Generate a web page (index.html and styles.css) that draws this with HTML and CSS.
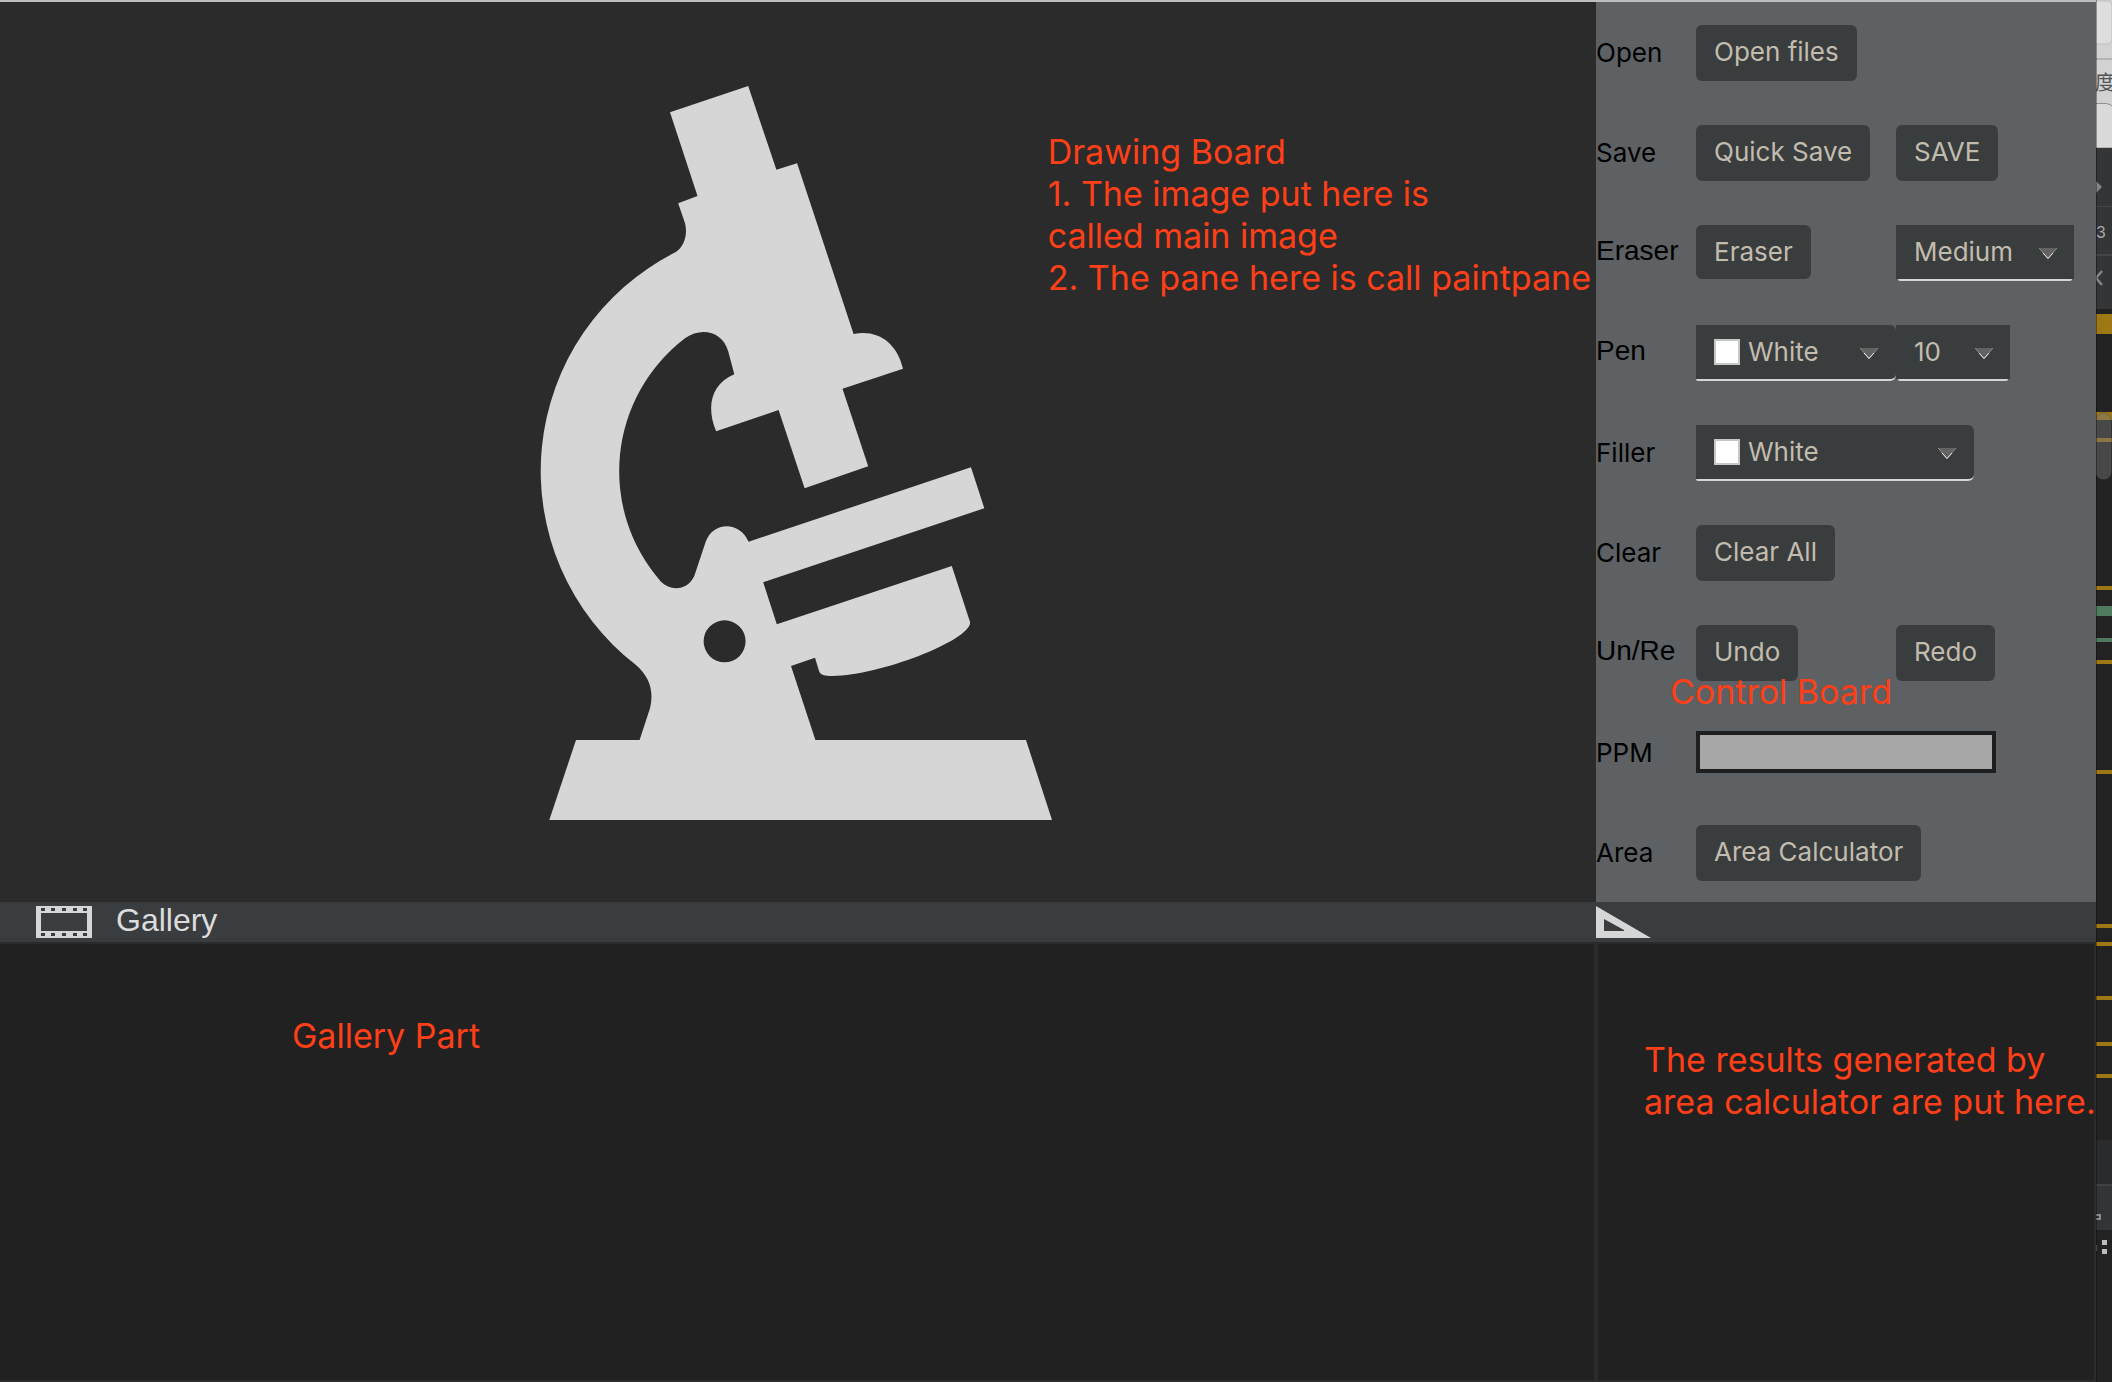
FILE: index.html
```html
<!DOCTYPE html>
<html lang="en">
<head>
<meta charset="utf-8">
<title>Microscope image editor</title>
<link rel="stylesheet" href="styles.css">
</head>
<body>
<div class="desktop">
  <div class="app">
    <main class="board">
      <svg class="microscope" viewBox="538 83 520 738" role="img" aria-label="Microscope">
        <path fill-rule="evenodd" d="M670 112.3 748.2 86 776.4 169.7 797.1 163.3 853.6 334C878 329 897 343 903 368.7L842.5 388.7 868.2 466.3 804.6 488.3 778.6 410 716.1 431.3C706 407 711 384 734.3 374.3L728.2 351.3C723 332 702 326 685 338.3A167 167 0 0 0 661 581.7C671 592 688 590 694.3 576L705.7 541.7C713 521 740 521 748.6 541.7L971 467.3 984.3 508.3 763.2 582.3 776.8 624.3 951.8 566 970 622C973 640 872 679 827 675.7Q820 675 819 671L815 657.7 791 666 815.4 740H1026L1052 820H549.3L576 740H639.6L650 708.3C654 692 650 677 636 665A245 245 0 0 1 675.4 252.3C684 247 688 235 685 223.3L678.2 203.3 697.5 196ZM745.6 641.3a21 21 0 1 0-42 0a21 21 0 1 0 42 0Z"/>
      </svg>
      <p class="note note-board">Drawing Board<br>1. The image put here is<br>called main image<br>2. The pane here is call paintpane</p>
    </main>

    <form class="controls">
      <div class="row">
        <label class="name" for="open">Open</label>
        <button id="open" class="btn" type="button">Open files</button>
      </div>
      <div class="row">
        <label class="name" for="quick">Save</label>
        <button id="quick" class="btn" type="button">Quick Save</button>
        <button class="btn" type="button">SAVE</button>
      </div>
      <div class="row">
        <label class="name name-alt" for="eraser">Eraser</label>
        <button id="eraser" class="btn btn-short" type="button">Eraser</button>
        <div class="combo combo-size">
          <select aria-label="Eraser size"><option>Medium</option></select>
          <svg class="arrow" viewBox="0 0 18 12"><path class="tri" d="M0 0H18L9 10Z"/><path class="side" d="M0 0 9 10.500 18 0"/><path class="vee" d="M4 5 9 10.500 14 5"/></svg>
        </div>
      </div>
      <div class="row">
        <label class="name name-alt" for="pen">Pen</label>
        <div class="combo picker">
          <span class="swatch"></span>
          <select id="pen"><option>White</option></select>
          <svg class="arrow" viewBox="0 0 18 12"><path class="tri" d="M0 0H18L9 10Z"/><path class="side" d="M0 0 9 10.500 18 0"/><path class="vee" d="M4 5 9 10.500 14 5"/></svg>
        </div>
        <div class="combo combo-width">
          <select aria-label="Pen width"><option>10</option></select>
          <svg class="arrow" viewBox="0 0 18 12"><path class="tri" d="M0 0H18L9 10Z"/><path class="side" d="M0 0 9 10.500 18 0"/><path class="vee" d="M4 5 9 10.500 14 5"/></svg>
        </div>
      </div>
      <div class="row">
        <label class="name" for="filler">Filler</label>
        <div class="combo picker picker-wide">
          <span class="swatch"></span>
          <select id="filler"><option>White</option></select>
          <svg class="arrow" viewBox="0 0 18 12"><path class="tri" d="M0 0H18L9 10Z"/><path class="side" d="M0 0 9 10.500 18 0"/><path class="vee" d="M4 5 9 10.500 14 5"/></svg>
        </div>
      </div>
      <div class="row">
        <label class="name" for="clear">Clear</label>
        <button id="clear" class="btn" type="button">Clear All</button>
      </div>
      <div class="row">
        <label class="name name-alt" for="undo">Un/Re</label>
        <button id="undo" class="btn" type="button">Undo</button>
        <button class="btn" type="button">Redo</button>
      </div>
      <div class="row">
        <label class="name" for="ppm">PPM</label>
        <input id="ppm" class="field" type="text">
      </div>
      <div class="row">
        <label class="name" for="area">Area</label>
        <button id="area" class="btn btn-wide" type="button">Area Calculator</button>
      </div>
      <p class="note note-controls">Control Board</p>
    </form>

    <header class="bar bar-gallery">
      <svg class="film" viewBox="0 0 56 32" aria-hidden="true"><path fill-rule="evenodd" d="M0 0H56V32H0ZM5 7V25H51V7ZM5 2V5H9V2ZM15 2V5H19V2ZM26 2V5H30V2ZM37 2V5H41V2ZM47 2V5H51V2ZM5 27V30H9V27ZM15 27V30H19V27ZM26 27V30H30V27ZM37 27V30H41V27ZM47 27V30H51V27Z"/></svg>
      <h2 class="title">Gallery</h2>
    </header>
    <header class="bar">
      <svg class="ruler" viewBox="0 0 56 32" aria-hidden="true"><path fill-rule="evenodd" d="M0 0 55 32H0ZM8 13V25H28V24Z"/></svg>
    </header>

    <section class="pane pane-gallery">
      <p class="note">Gallery Part</p>
    </section>
    <section class="pane pane-results">
      <p class="note">The results generated by<br>area calculator are put here.</p>
    </section>
  </div>

  <aside class="behind" aria-hidden="true">
    <svg class="behind-art" width="16" height="1382" viewBox="0 0 16 1382">
      <path fill="#222" d="M0 0H16V1382H0Z"/>
      <path fill="#d2d2d2" d="M0 0H16V148H0Z"/>
      <path fill="#dedede" stroke="#bdbdbd" d="M-1 1H12Q16 1 16 6V39Q16 44 10 44H-1Z"/>
      <path fill="#b4b4b4" d="M0 58H16V60H0Z"/>
      <path fill="#dadada" stroke="#8e8e8e" d="M-1 103.500H10Q15 104 17 107V148H-1Z"/>
      <text class="behind-cjk" x="-1" y="90">度</text>
      <path fill="#333537" d="M0 148H16V309H0Z"/>
      <path fill="#444648" d="M0 206H16V207H0ZM0 254H16V256H0Z"/>
      <path fill="#858585" d="M0 181 6 187 0 193Z"/>
      <text class="behind-num" x="0" y="238">3</text>
      <path fill="none" stroke="#858585" stroke-width="2.500" d="M6 271 0 278 6 285"/>
      <path fill="#9e7814" d="M0 314H16V334H0ZM0 412H16V420H0ZM0 438H16V442H0ZM0 586H16V590H0ZM0 660H16V664H0ZM0 770H16V774H0ZM0 924H16V928H0ZM0 942H16V946H0ZM0 996H16V1000H0ZM0 1042H16V1046H0ZM0 1074H16V1078H0Z"/>
      <rect x="0" y="413" width="15" height="66" rx="7" fill="#777" fill-opacity=".45" stroke="#555" stroke-opacity=".6"/>
      <path fill="#507b5e" d="M0 606H16V616H0ZM0 638H16V642H0Z"/>
      <path fill="#292b2d" d="M0 1140H16V1184H0Z"/>
      <path fill="#404244" d="M0 1184H16V1186H0Z"/>
      <path fill="#323537" d="M0 1186H16V1230H0Z"/>
      <path fill="none" stroke="#8c8c8c" stroke-width="2" d="M0 1215H4V1219H0"/>
      <path fill="#b9bdc0" d="M6 1240H11V1245H6ZM6 1249H11V1254H6Z"/>
      <path fill="#8a6a4c" d="M0 1245H1V1251H0Z"/>
      <path fill="#000" fill-opacity=".35" d="M0 0H1V1382H0Z"/>
    </svg>
  </aside>
</div>
</body>
</html>
```
FILE: styles.css
```css
* {
  box-sizing: border-box;
}

body {
  margin: 0;
  background: #212121;
  font-family: Inter, "Liberation Sans", sans-serif;
  font-size: 26px;
}

p,
h2 {
  margin: 0;
}

.desktop {
  display: flex;
  min-height: 100vh;
}

.app {
  flex: 1;
  display: grid;
  grid-template-columns: 1fr 500px;
  grid-template-rows: auto 42px 1fr;
  border-top: 2px solid #bebebe;
}

/* Drawing board */
.board {
  position: relative;
  display: grid;
  place-items: center;
  background: #2b2b2b;
}

.microscope {
  width: 520px;
  fill: #d6d6d6;
}

.note {
  color: #ff3f18;
  font-size: 34px;
  line-height: 42px;
  white-space: nowrap;
}

.note-board {
  position: absolute;
  top: 129px;
  right: 5px;
}

/* Control board */
.controls {
  position: relative;
  background: #5d6163;
}

.row {
  display: grid;
  grid-template-columns: 100px 200px 200px;
  align-items: center;
  justify-items: start;
  height: 100px;
  padding-top: 2px;
}

.name {
  padding-bottom: 2px;
  color: #000;
}

.name-alt {
  padding-bottom: 4px;
  font-family: "Liberation Sans", sans-serif;
  font-size: 28px;
}

.btn {
  height: 56px;
  padding: 0 18px 4px;
  border: 0;
  border-radius: 6px;
  background: #3a3d3e;
  color: #c2bcae;
  font: inherit;
  white-space: nowrap;
}

.btn-short {
  height: 54px;
  margin-bottom: 2px;
  padding-bottom: 2px;
}

.btn-wide {
  grid-column: span 2;
}

.combo {
  display: grid;
  grid-template-columns: 1fr 18px;
  grid-template-rows: 54px 2px;
  align-items: center;
  padding-right: 17px;
  background: linear-gradient(#3a3d3e, #3a3d3e) top / 100% 54px no-repeat;
}

.combo::after {
  content: "";
  grid-area: 2 / 1 / 3 / 3;
  height: 2px;
  margin: 0 -15px 0 2px;
  border-radius: 0 0 2px 2px;
  background: #d6d6d6;
}

.combo select {
  grid-area: 1 / 1 / 2 / 3;
  height: 54px;
  margin: 0;
  padding: 0 0 2px 18px;
  border: 0;
  background: transparent;
  color: #c2bcae;
  font: inherit;
  appearance: none;
}

.arrow {
  grid-area: 1 / 2;
  width: 18px;
  height: 12px;
  margin-top: 4px;
  pointer-events: none;
}

.tri {
  fill: #626262;
}

.side,
.vee {
  fill: none;
  stroke: #8f8f8f;
}

.vee {
  stroke: #f0f0f0;
}

.combo-size {
  width: 178px;
}

.combo-width {
  width: 114px;
}

.picker {
  width: 200px;
  height: 56px;
  grid-template-rows: 54px;
  padding-right: 18px;
  border-bottom: 2px solid #d6d6d6;
  border-radius: 0 6px 6px 2px;
  background: #3a3d3e;
}

.picker::after {
  content: none;
}

.picker select {
  padding-left: 52px;
}

.picker-wide {
  grid-column: span 2;
  width: 278px;
}

.swatch {
  grid-area: 1 / 1;
  width: 26px;
  height: 26px;
  margin-left: 18px;
  border: 2px solid #c8c8c8;
  background: #fff;
}

.field {
  grid-column: span 2;
  width: 300px;
  height: 42px;
  margin-bottom: 2px;
  border: 4px solid #1f1f1f;
  border-radius: 0;
  background: #a6a6a6;
  font: inherit;
}

.note-controls {
  position: absolute;
  top: 669px;
  left: 74px;
}

/* Section bars */
.bar {
  display: flex;
  align-items: center;
  background: #3a3d3f;
  border-bottom: 2px solid #2b2b2b;
}

.bar-gallery {
  gap: 24px;
  padding-left: 36px;
}

.film,
.ruler {
  width: 56px;
  height: 32px;
  fill: #d6d6d6;
}

.title {
  padding-bottom: 4px;
  color: #dcdcdc;
  font: 32px/36px "Liberation Sans", sans-serif;
}

/* Lower panes */
.pane {
  border: 2px solid #2b2b2b;
  border-top: 0;
  background: #212121;
}

.pane-gallery {
  padding: 71px 0 0 292px;
  border-left: 0;
}

.pane-results {
  padding: 95px 0 0 46px;
}

/* Edge of the window behind the application */
.behind {
  width: 16px;
  overflow: hidden;
}

.behind-art {
  display: block;
}

.behind-cjk {
  fill: #555;
  font: 20px "Noto Sans CJK SC", sans-serif;
}

.behind-num {
  fill: #aaa;
  font: 16px Inter, sans-serif;
}
```
